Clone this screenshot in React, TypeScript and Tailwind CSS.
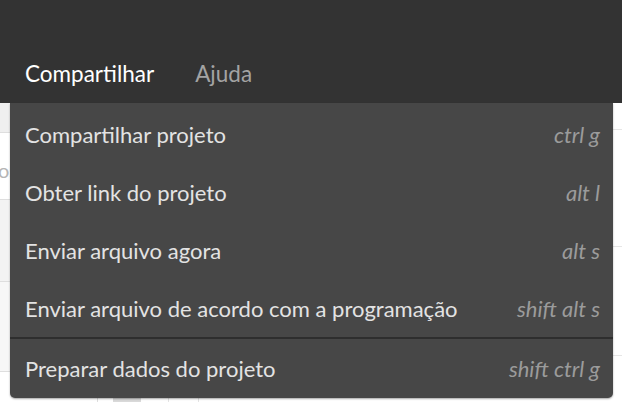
import React from 'react';

type MenuItem = { label: string; shortcut: string; divider?: boolean };

const items: MenuItem[] = [
  { label: 'Compartilhar projeto', shortcut: 'ctrl g' },
  { label: 'Obter link do projeto', shortcut: 'alt l' },
  { label: 'Enviar arquivo agora', shortcut: 'alt s' },
  { label: 'Enviar arquivo de acordo com a programação', shortcut: 'shift alt s' },
  { label: 'Preparar dados do projeto', shortcut: 'shift ctrl g', divider: true },
];

const font = { fontFamily: 'Lato, "Open Sans", sans-serif' };

const App: React.FC = () => {
  return (
    <div className="relative h-[402px] w-[622px] overflow-hidden bg-white" style={font}>
      {/* top bar */}
      <div className="flex h-[103px] items-end bg-[#333333] px-[25px] pb-[14px]">
        <span className="text-[22.5px] leading-[30px] text-white">Compartilhar</span>
        <span className="ml-[41px] text-[22.5px] leading-[30px] text-[#a3a3a3]">Ajuda</span>
      </div>

      {/* page behind the menu */}
      <div className="flex">
        <div className="w-[300px]">
          <div className="h-[30px] border-b border-[#dedede] bg-[#efefef]" />
          <div className="flex h-[67px] items-center border-b border-[#dedede] bg-white pt-[8px] text-[20px] text-[#b5b5b5]">
            <span className="-ml-[2px]">os</span>
          </div>
          <div className="h-[82px] border-b border-[#dedede] bg-[#f3f3f3]" />
          <div className="h-[90px] border-b border-[#dedede] bg-[#f7f7f7]" />
          <div className="flex h-[30px]">
            <div className="w-[97px]" />
            <div className="w-[16px] border-l border-[#dedede]" />
            <div className="w-[28px] bg-[#d9d9d9]" />
            <div className="w-[28px] border-r border-[#e4e4e4]" />
            <div className="w-[30px] border-r border-[#e4e4e4]" />
          </div>
        </div>
        <div className="flex-1">
          <div className="h-[27px] border-b border-[#e6e6e6]" />
          <div className="h-[117px] border-b border-[#e6e6e6]" />
          <div className="h-[109px] border-b border-[#e6e6e6]" />
        </div>
      </div>

      {/* dropdown menu */}
      <div className="absolute left-[10px] top-[103px] w-[603px] rounded-b-[5px] bg-[#474747] pt-[2px] pb-[1px] shadow-[0_1px_2px_rgba(0,0,0,0.35)]">
        {items.map((item) => (
          <div key={item.label}>
            {item.divider && <div className="h-[2px] bg-[#2e2e2e]" />}
            <div className="flex h-[58px] items-center justify-between pl-[15px] pr-[13px]">
              <span className="text-[22px] text-[#e3e3e3]">{item.label}</span>
              <span className="text-[22px] italic text-[#9b9b9b]">{item.shortcut}</span>
            </div>
          </div>
        ))}
      </div>
    </div>
  );
};

export default App;
